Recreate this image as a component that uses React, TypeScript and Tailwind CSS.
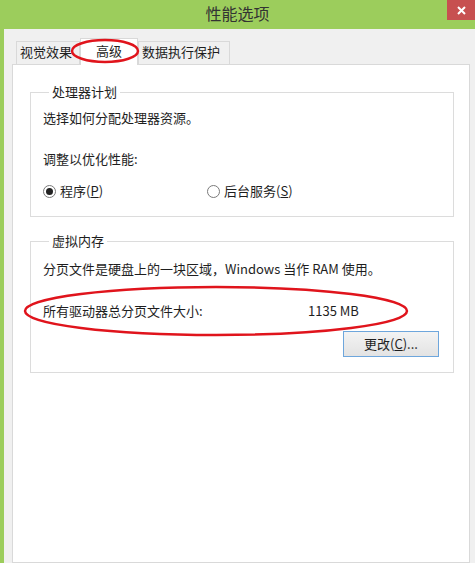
import React from 'react'

const font = { fontFamily: '"Noto Sans CJK SC", "Noto Sans", sans-serif' }

function Tab({ label, width, active }: { label: string; width: string; active?: boolean }) {
  if (active) {
    return (
      <div className={`relative z-10 -mb-px h-[27px] ${width} flex items-start justify-center pt-[3px] bg-white border border-b-0 border-[#d9d9d9] text-[13px] leading-[18px] text-[#1e1e1e]`}>
        {label}
      </div>
    )
  }
  return (
    <div className={`h-[23px] ${width} pl-[3px] flex items-start bg-[#f0f0f0] border border-b-0 border-[#d9d9d9] text-[13px] leading-[20px] text-[#1e1e1e]`}>
      {label}
    </div>
  )
}

function Radio({ checked, label, hotkey }: { checked?: boolean; label: string; hotkey: string }) {
  return (
    <div className="flex items-center gap-[4px]">
      <span className="w-[13px] h-[13px] rounded-full border border-[#7a7a7a] bg-white flex items-center justify-center">
        {checked && <span className="w-[7px] h-[7px] rounded-full bg-[#222]" />}
      </span>
      <span>
        {label}(<span className="underline">{hotkey}</span>)
      </span>
    </div>
  )
}

export default function App() {
  return (
    <div className="relative w-[475px] h-[563px] overflow-hidden bg-[#9ccd5c] flex flex-col" style={font}>
      {/* title bar */}
      <div className="relative h-[29px] flex justify-center">
        <span className="text-[16px] leading-[26px] text-[#333]">性能选项</span>
        <div className="absolute right-0 top-0 w-[28px] h-[20px] bg-[#c75050] flex items-center justify-center">
          <svg width="9" height="9" viewBox="0 0 9 9">
            <path d="M1 1 L8 8 M8 1 L1 8" stroke="white" strokeWidth="2" />
          </svg>
        </div>
      </div>

      {/* body */}
      <div className="flex-1 ml-[4px] bg-[#f0f0f0] pt-[9px] pl-[8px] pr-[5px] flex flex-col">
        <div className="flex items-end ml-[4px]">
          <Tab label="视觉效果" width="w-[64px]" />
          <Tab label="高级" width="w-[58px]" active />
          <Tab label="数据执行保护" width="w-[92px]" />
        </div>

        <div className="flex-1 bg-white border border-[#d9d9d9] pl-[17px] pr-[15px] pt-[19px] text-[13px] leading-[16px] text-[#1e1e1e]">
          <fieldset className="border border-[#dcdcdc] pl-[12px] pr-[12px] pb-[17px]">
            <legend className="ml-[6px] px-[3px]">处理器计划</legend>
            <p className="mt-[10px]">选择如何分配处理器资源。</p>
            <p className="mt-[25px]">调整以优化性能:</p>
            <div className="mt-[16px] flex">
              <div className="w-[164px]">
                <Radio checked label="程序" hotkey="P" />
              </div>
              <Radio label="后台服务" hotkey="S" />
            </div>
          </fieldset>

          <fieldset className="mt-[16px] border border-[#dcdcdc] pl-[12px] pr-[14px] pb-[15px]">
            <legend className="ml-[6px] px-[3px]">虚拟内存</legend>
            <p className="mt-[12px]">分页文件是硬盘上的一块区域，Windows 当作 RAM 使用。</p>
            <div className="mt-[26px] flex">
              <span className="w-[265px]">所有驱动器总分页文件大小:</span>
              <span>1135 MB</span>
            </div>
            <div className="mt-[12px] flex justify-end">
              <button className="w-[96px] h-[26px] border border-[#6ea6dc] bg-gradient-to-b from-[#f3f3f3] to-[#e3e3e3] text-[13px] text-[#1e1e1e] flex items-center justify-center">
                更改(<span className="underline">C</span>)...
              </button>
            </div>
          </fieldset>
        </div>
      </div>

      {/* red annotation marks */}
      <svg className="absolute left-0 top-0 z-20 pointer-events-none" width="475" height="563">
        <ellipse cx="105" cy="51" rx="33" ry="11" fill="none" stroke="#e0141c" strokeWidth="2.5" />
        <ellipse cx="216" cy="311" rx="191" ry="24" fill="none" stroke="#e0141c" strokeWidth="2.5" />
      </svg>
    </div>
  )
}
